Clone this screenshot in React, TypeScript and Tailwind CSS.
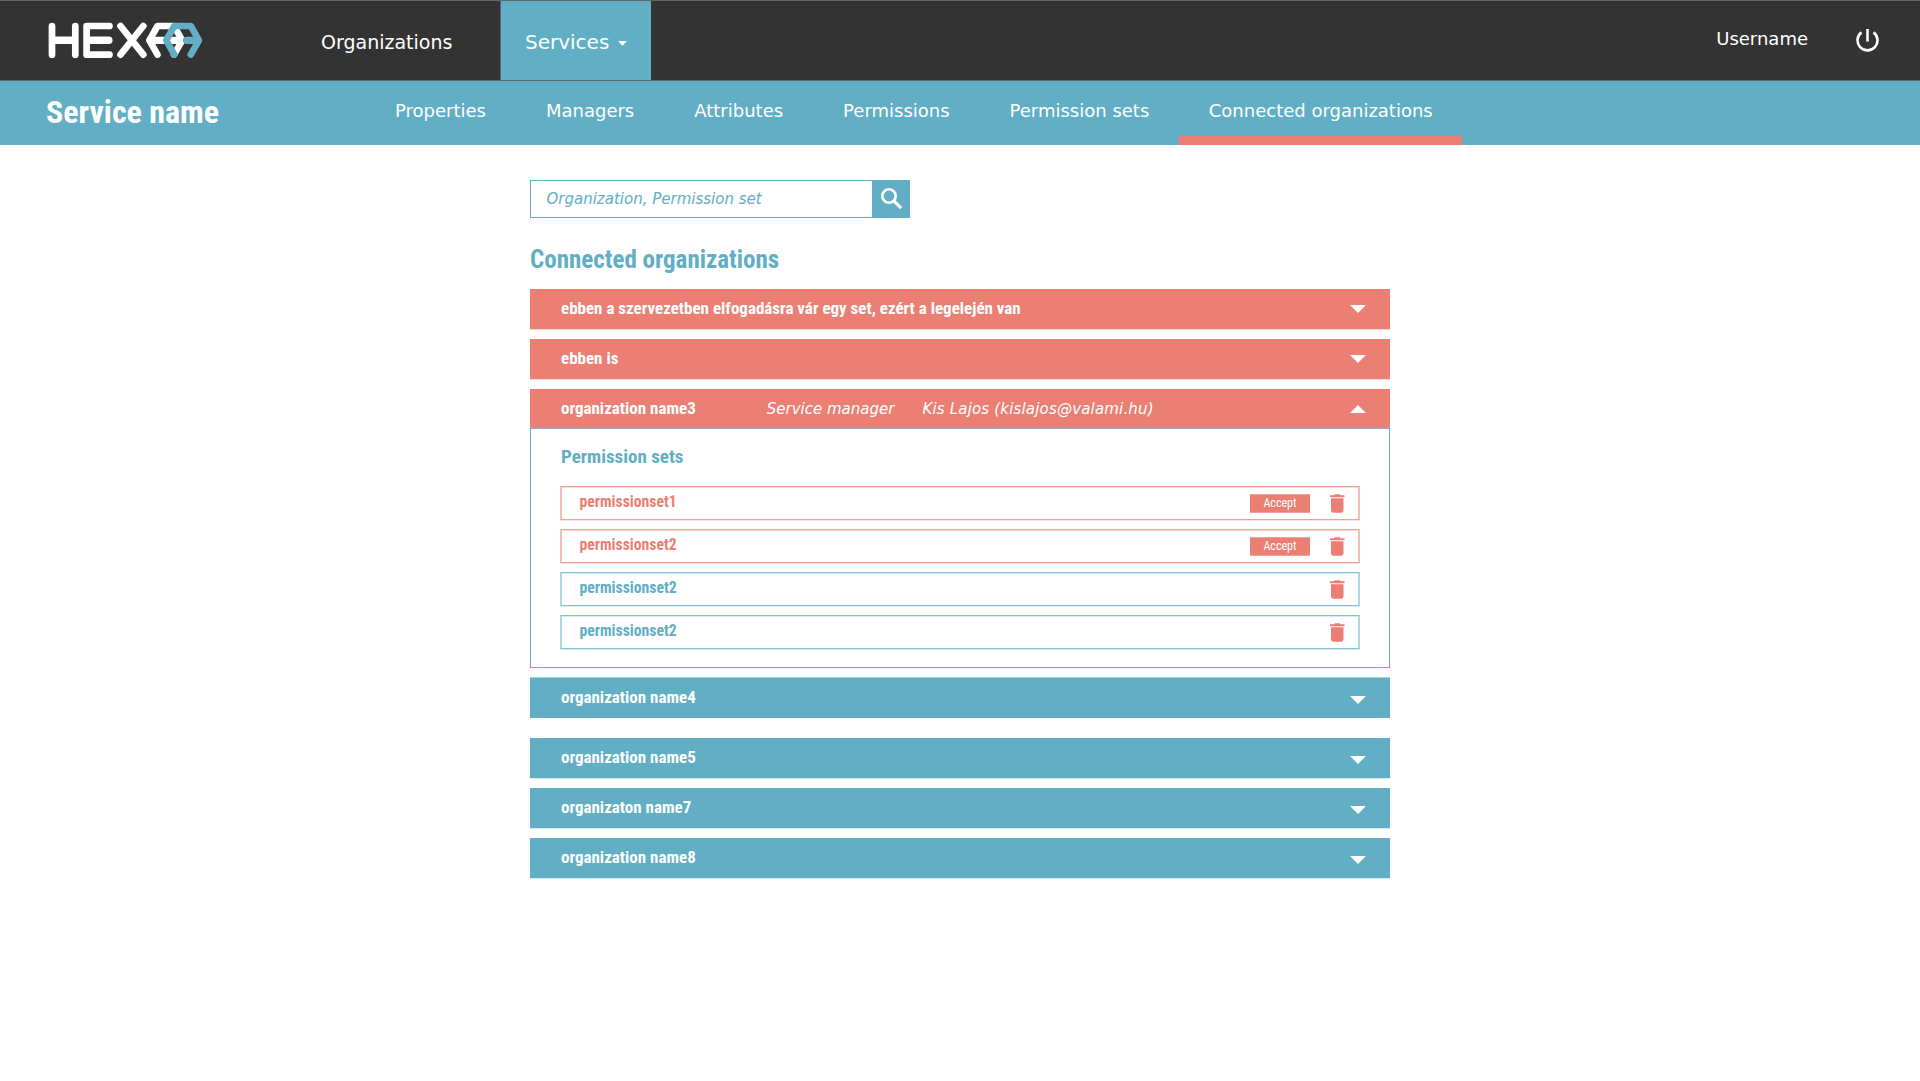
import type { ReactNode } from "react";

const tabs = [
  "Properties",
  "Managers",
  "Attributes",
  "Permissions",
  "Permission sets",
  "Connected organizations",
];

const permissionSets = [
  { name: "permissionset1", pending: true },
  { name: "permissionset2", pending: true },
  { name: "permissionset2", pending: false },
  { name: "permissionset2", pending: false },
];

function Logo() {
  return (
    <svg className="block" width="158" height="40" viewBox="0 0 158 40" fill="none" strokeLinecap="round" strokeLinejoin="round">
      <g stroke="#fff" strokeWidth="6.7">
        <path d="M4 6v28.7M27.3 6v28.7" />
        <path d="M61.5 6H38.6V34.7H61.5" />
        <path d="M72.5 6l22.8 28.7M95.3 6L72.5 34.7" />
      </g>
      <path stroke="#fff" strokeWidth="7.6" d="M5 20.3h21M40 20.3h20.8" />
      <path stroke="#fff" strokeWidth="6.6" d="M109.5 34.6L101.4 20.3L109.5 6H126L134.2 20.3L126 34.6" />
      <path stroke="#fff" strokeWidth="7.2" d="M102 20.3H133" />
      <path stroke="#61aec5" strokeWidth="6.6" d="M126.3 34.6L118.2 20.3L126.3 6H142.8L150.9 20.3L142.8 34.6" />
      <path stroke="#61aec5" strokeWidth="7.2" d="M138.5 20.3H150" />
    </svg>
  );
}

function Chevron({ up = false }: { up?: boolean }) {
  return (
    <svg className="block" width="16" height="8" viewBox="0 0 16 8" fill="#fff">
      <path d={up ? "M0 8L8 0L16 8Z" : "M0 0H16L8 8Z"} />
    </svg>
  );
}

function Trash() {
  return (
    <svg className="block" width="15" height="19" viewBox="0 0 15 19" fill="#eb7f73">
      <path d="M0 1.2H3.8L4.9 0.2H9.8L10.8 1.2H14.5V3.3H0ZM1 4.3H13.5V16.6Q13.5 18.7 11.4 18.7H3.1Q1 18.7 1 16.6Z" />
    </svg>
  );
}

function Bar({ title, tone, up, chevron, children }: { title: string; tone: string; up?: boolean; chevron: string; children?: ReactNode }) {
  return (
    <div className={`flex h-10 items-start pl-[31px] pr-6 text-white ${tone}`}>
      <span className="font-['Roboto_Condensed'] text-[17px] leading-[38px] font-bold whitespace-nowrap">{title}</span>
      {children}
      <span className={`ml-auto ${chevron}`}>
        <Chevron up={up} />
      </span>
    </div>
  );
}

const coral = "bg-[#eb7f73] shadow-[0_1px_0_#f9d8d5]";
const teal = "bg-[#61aec5] shadow-[0_1px_0_#d3e9ef]";

export default function App() {
  return (
    <div className="min-h-[1081px] w-[1920px] bg-white font-['DejaVu_Sans',sans-serif]">
      <header className="flex h-[81px] items-start border-y border-[#5f6869] bg-[#333] text-white">
        <div className="w-[320px] pt-[19px] pl-12">
          <Logo />
        </div>
        <a className="w-[180px] pl-px text-[19px] leading-[83px]">Organizations</a>
        <a className="flex h-[79px] w-[151px] items-start border-l border-[#4a6a74] bg-[#61aec5] pl-[24px] text-[20px] leading-[82px]">
          Services
          <svg className="mt-[40px] ml-[9px]" width="9" height="5" viewBox="0 0 9 5" fill="#fff">
            <path d="M0 0H9L4.5 4.7Z" />
          </svg>
        </a>
        <span className="ml-auto text-[18px] leading-[76px]">Username</span>
        <svg className="mt-7 mr-[41px] ml-[48px]" width="23" height="23" viewBox="0 0 23 23" fill="none" stroke="#fff" strokeWidth="2.6">
          <path d="M11.5 0V12.5M5.5 3.4A10 10 0 1 0 17.5 3.4" />
        </svg>
      </header>

      <nav className="flex h-16 items-start bg-[#61aec5] text-white">
        <h1 className="w-[365px] pl-[46px] font-['Roboto_Condensed'] text-[32px] leading-[62px] font-bold">Service name</h1>
        {tabs.map((tab, i) => (
          <a
            key={tab}
            className={`h-16 text-[18px] leading-[60px] whitespace-nowrap ${
              i === tabs.length - 1 ? "w-[283px] border-b-[9px] border-[#eb7f73] pl-[29.5px]" : "px-[30px]"
            }`}
          >
            {tab}
          </a>
        ))}
      </nav>

      <main className="mx-auto w-[860px] pt-[35px]">
        <div className="flex h-[38px] w-[380px] border border-r-0 border-[#61aec5] text-[#61aec5]">
          <span className="flex-1 pl-[15.5px] text-[15px] leading-[36px] italic">Organization, Permission set</span>
          <span className="w-[38px] bg-[#61aec5]">
            <svg className="mt-[7px] ml-[9px] block" width="22" height="22" viewBox="0 0 22 22" fill="none" stroke="#fff">
              <circle cx="8" cy="8" r="6.7" strokeWidth="2.6" />
              <path d="M12.8 12.8L20.2 20.2" strokeWidth="3.2" />
            </svg>
          </span>
        </div>

        <h2 className="mt-[23px] font-['Roboto_Condensed'] text-[25px] leading-[38px] font-bold text-[#61aec5]">Connected organizations</h2>

        <div className="mt-[10px] flex flex-col gap-[10px]">
          <Bar title="ebben a szervezetben elfogadásra vár egy set, ezért a legelején van" tone={coral} chevron="mt-4" />
          <Bar title="ebben is" tone={coral} chevron="mt-4" />
          <section>
            <Bar title="organization name3" tone="bg-[#eb7f73]" up chevron="mt-4">
              <span className="ml-[71px] text-[15px] leading-[40px] italic">Service manager</span>
              <span className="ml-[28px] text-[15px] leading-[40px] tracking-[0.18px] italic">Kis Lajos (kislajos@valami.hu)</span>
            </Bar>
            <div className="-mt-[2px] h-[241px] border border-t-2 border-[#61aec5] border-t-[#a89ca3] px-[29px] pt-[12px]">
              <h3 className="pl-px font-['Roboto_Condensed'] text-[19px] leading-[32px] font-bold text-[#61aec5]">Permission sets</h3>
              <ul className="mt-[13px] flex flex-col gap-[9px]">
                {permissionSets.map((set, i) => (
                  <li
                    key={i}
                    className={`flex h-[34px] items-start border-x-2 border-y pr-[13px] pl-[17.5px] ${
                      set.pending
                        ? "border-x-[#f5bfb9] border-y-[#f09f96] text-[#eb7f73] shadow-[0_1px_0_#fbdfdc,inset_0_1px_0_#fbdfdc]"
                        : "border-x-[#b0d7e2] border-y-[#85c0d2] text-[#61aec5] shadow-[0_1px_0_#d7ebf1,inset_0_1px_0_#d7ebf1]"
                    }`}
                  >
                    <span className="mr-auto font-['Roboto_Condensed'] text-[15.7px] leading-[29.5px] font-bold">{set.name}</span>
                    {set.pending && (
                      <button className="mt-[7px] mr-5 h-[19px] w-[60px] bg-[#eb7f73] font-['Roboto_Condensed'] text-[12px] leading-[17px] text-white shadow-[inset_0_1px_0_#f1a198,inset_0_-1px_0_#f1a198]">
                        Accept
                      </button>
                    )}
                    <span className="mt-[7px]">
                      <Trash />
                    </span>
                  </li>
                ))}
              </ul>
            </div>
          </section>
          <Bar title="organization name4" tone="bg-[#61aec5] shadow-[0_-1px_0_#a5d2df]" chevron="mt-[18px]" />
          <div className="mt-[10px]">
            <Bar title="organization name5" tone={teal} chevron="mt-[18px]" />
          </div>
          <Bar title="organizaton name7" tone={teal} chevron="mt-[18px]" />
          <Bar title="organization name8" tone={teal} chevron="mt-[18px]" />
        </div>
      </main>
    </div>
  );
}
